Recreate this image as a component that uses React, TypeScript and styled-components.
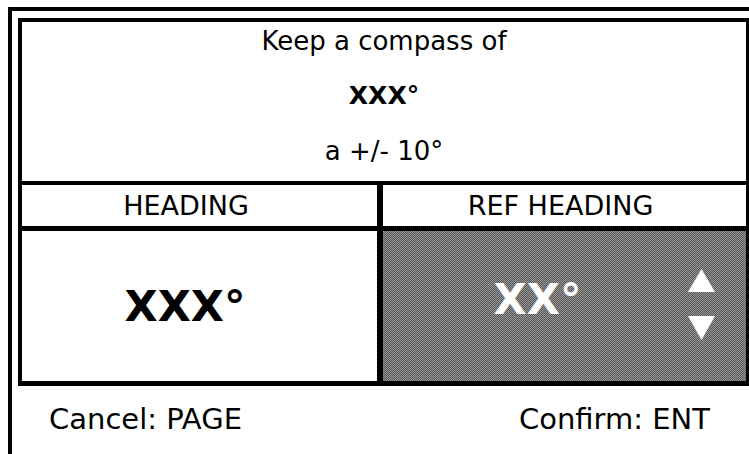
import React from 'react';
import styled, { createGlobalStyle } from 'styled-components';

const GlobalStyle = createGlobalStyle`
  html, body {
    margin: 0;
    padding: 0;
    background: #fff;
    overflow: hidden;
  }
  body {
    font-family: 'DejaVu Sans', Verdana, sans-serif;
    color: #000;
  }
`;

function Arrow({ dir }: { dir: 'up' | 'down' }) {
  return (
    <svg width='27' height='24' viewBox='0 0 27 24'>
      {dir === 'up' ? <polygon points='13.5,1 27,24 0,24' fill='#fff' /> : <polygon points='0,0 27,0 13.5,24' fill='#fff' />}
    </svg>
  );
}

function App() {
  return (
    <>
      <GlobalStyle />
      <Frame>
        <Box>
          <Instruction>
            <Line>Keep a compass of</Line>
            <Line $bold>XXX°</Line>
            <Line>a +/- 10°</Line>
          </Instruction>
          <Table>
            <HeadCell $shift={27}>HEADING</HeadCell>
            <HeadCell $shift={8}>REF HEADING</HeadCell>
            <ValueCell>
              <Value $padRight={29}>XXX°</Value>
            </ValueCell>
            <ValueCell $selected>
              <Value $padLeft={4} $padBottom={14}>XX°</Value>
              <Arrows>
                <Arrow dir='up' />
                <Arrow dir='down' />
              </Arrows>
            </ValueCell>
          </Table>
        </Box>
        <Footer>
          <span>Cancel: PAGE</span>
          <span>Confirm: ENT</span>
        </Footer>
      </Frame>
    </>
  );
}

const Frame = styled.div`
  box-sizing: border-box;
  margin: 7px 0 0 8px;
  height: calc(100vh - 7px);
  border-top: 4px solid #000;
  border-left: 4px solid #000;
`;

const Box = styled.div`
  box-sizing: border-box;
  width: 732px;
  margin: 7px 0 0 6px;
  border: 4px solid #000;
  border-bottom-width: 5px;
`;

const Instruction = styled.div`
  height: 159px;
  border-bottom: 4px solid #000;
  display: flex;
  flex-direction: column;
  align-items: center;
  gap: 17px;
`;

const Line = styled.div<{ $bold?: boolean }>`
  height: 38px;
  line-height: 38px;
  font-size: ${(p) => (p.$bold ? '25px' : '26px')};
  font-weight: ${(p) => (p.$bold ? 700 : 400)};
`;

const Table = styled.div`
  display: grid;
  grid-template-columns: 355px 1fr;
  grid-template-rows: 41px 150px;
  column-gap: 6px;
  row-gap: 5px;
  background: #000;
`;

const HeadCell = styled.div<{ $shift: number }>`
  background: #fff;
  display: flex;
  align-items: center;
  justify-content: center;
  padding-right: ${(p) => p.$shift}px;
  font-size: 27px;
`;

const ValueCell = styled.div<{ $selected?: boolean }>`
  display: flex;
  align-items: center;
  background: ${(p) => (p.$selected ? 'repeating-conic-gradient(#555 0 25%, #9a9a9a 0 50%) 0 0 / 2px 2px' : '#fff')};
  color: ${(p) => (p.$selected ? '#fff' : '#000')};
`;

const Value = styled.div<{ $padLeft?: number; $padRight?: number; $padBottom?: number }>`
  flex: 1;
  text-align: center;
  font-size: 43px;
  font-weight: 700;
  padding-left: ${(p) => p.$padLeft ?? 0}px;
  padding-right: ${(p) => p.$padRight ?? 0}px;
  padding-bottom: ${(p) => p.$padBottom ?? 0}px;
`;

const Arrows = styled.div`
  display: flex;
  flex-direction: column;
  gap: 24px;
  margin-right: 31px;
  padding-bottom: 4px;
`;

const Footer = styled.div`
  display: flex;
  justify-content: space-between;
  width: 732px;
  box-sizing: border-box;
  padding: 16px 34px 0 37px;
  line-height: 34px;
  font-size: 29px;
`;

export default App;
